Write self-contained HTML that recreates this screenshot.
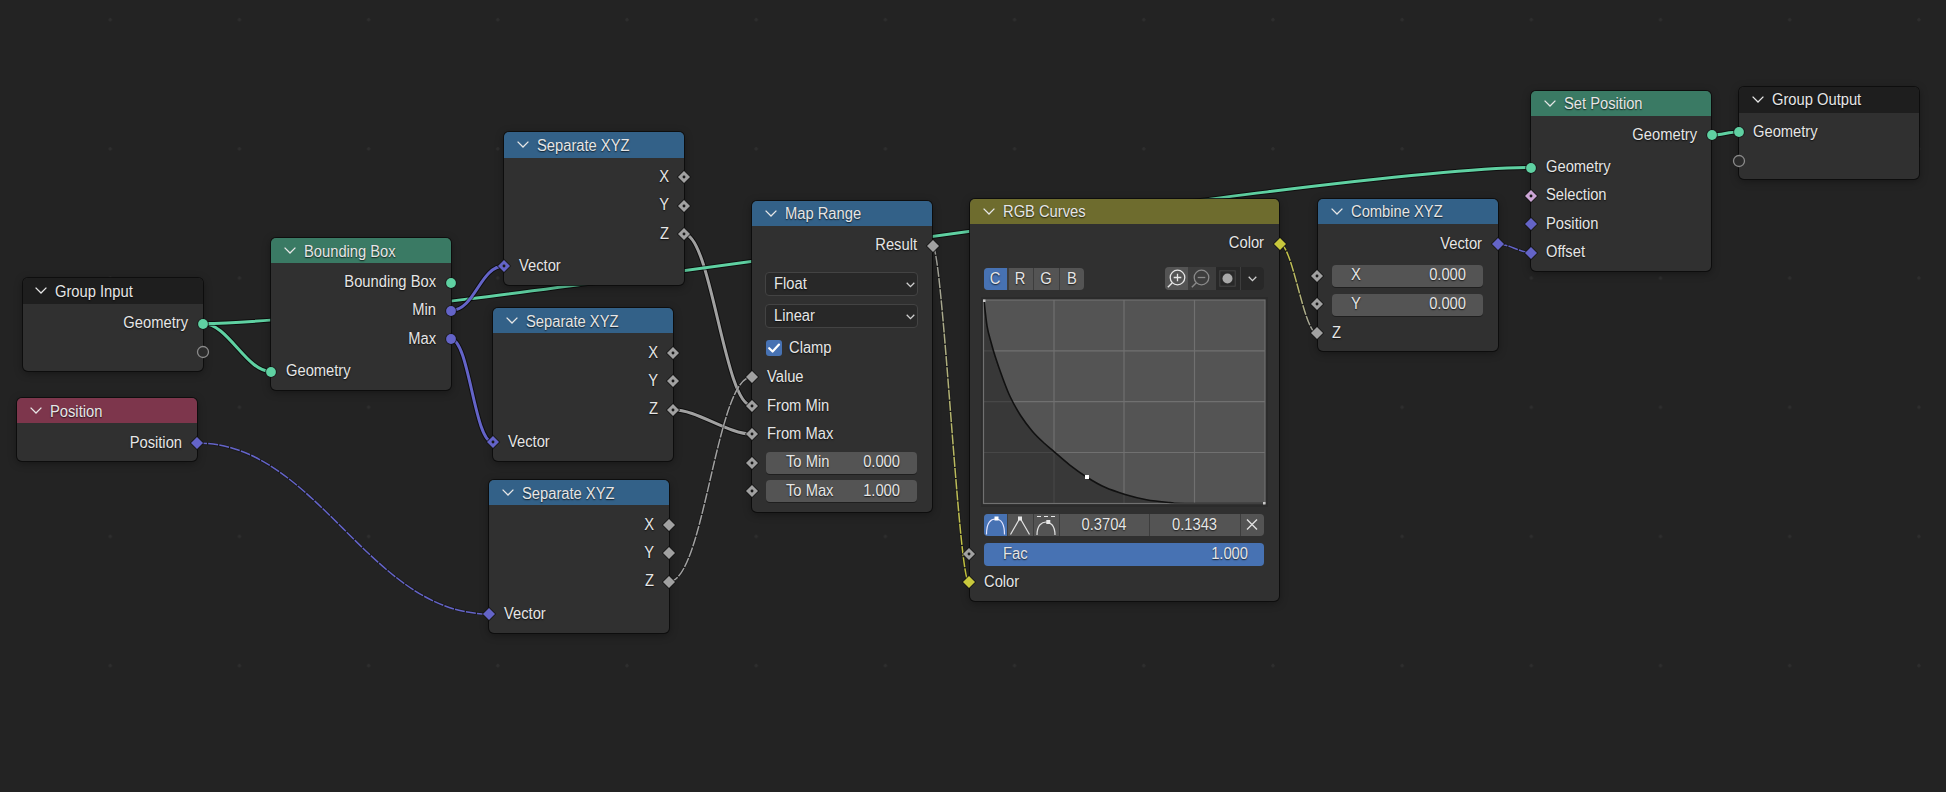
<!DOCTYPE html>
<html><head><meta charset="utf-8"><style>
html,body{margin:0;padding:0;}
body{width:1946px;height:792px;overflow:hidden;background:#232323;position:relative;background-image:radial-gradient(circle at 110.3px 19.7px, #2e2e2e 0, #2e2e2e 1.3px, rgba(35,35,35,0) 2px);background-size:129.2px 129.2px;background-position:0 0;font-family:"Liberation Sans",sans-serif;}
.n{position:absolute;background:#303030;border-radius:5px;box-shadow:0 0 0 1px rgba(10,10,10,0.8),0 2px 9px rgba(0,0,0,0.38);overflow:hidden;}
.hd{position:absolute;left:0;top:0;right:0;}
.t{position:absolute;font-size:16px;line-height:18px;color:#e6e6e6;white-space:nowrap;transform:scaleX(0.92);transform-origin:0 50%;text-shadow:0 1px 1.5px rgba(0,0,0,0.75);}
.r{text-align:right;transform-origin:100% 50%;}
.c{text-align:center;transform-origin:50% 50%;}
svg{position:absolute;left:0;top:0;overflow:visible;}
</style></head><body>

<svg width="1946" height="792" style="z-index:1">
<defs>
<linearGradient id="g8" gradientUnits="userSpaceOnUse" x1="932.5" y1="245.5" x2="968.8" y2="582"><stop offset="0" stop-color="#a1a1a1"/><stop offset="1" stop-color="#c8c83c"/></linearGradient>
<linearGradient id="g9" gradientUnits="userSpaceOnUse" x1="1279.5" y1="243.5" x2="1316.8" y2="333"><stop offset="0" stop-color="#c8c83c"/><stop offset="1" stop-color="#a1a1a1"/></linearGradient>
</defs>
<path d="M203,323.5 C228,323.5 246,371.5 271,371.5" fill="none" stroke="rgba(0,0,0,0.6)" stroke-width="5"/>
<path d="M203,323.5 C228,323.5 246,371.5 271,371.5" fill="none" stroke="#5fd1a2" stroke-width="3"/>
<path d="M684,234 C711,234 724.6,405.5 751.6,405.5" fill="none" stroke="rgba(0,0,0,0.6)" stroke-width="5"/>
<path d="M684,234 C711,234 724.6,405.5 751.6,405.5" fill="none" stroke="#a1a1a1" stroke-width="3"/>
<path d="M203,323.5 C403,323.5 1331,167.5 1531,167.5" fill="none" stroke="rgba(0,0,0,0.6)" stroke-width="5"/>
<path d="M203,323.5 C403,323.5 1331,167.5 1531,167.5" fill="none" stroke="#5fd1a2" stroke-width="3"/>
<path d="M451,310.5 C475,310.5 480,266 504,266" fill="none" stroke="rgba(0,0,0,0.6)" stroke-width="5"/>
<path d="M451,310.5 C475,310.5 480,266 504,266" fill="none" stroke="#6464c8" stroke-width="3"/>
<path d="M451,339 C469,339 474.5,442 492.5,442" fill="none" stroke="rgba(0,0,0,0.6)" stroke-width="5"/>
<path d="M451,339 C469,339 474.5,442 492.5,442" fill="none" stroke="#6464c8" stroke-width="3"/>
<path d="M197,443 C317,443 369,614 489,614" fill="none" stroke="rgba(0,0,0,0.25)" stroke-width="3.0"/>
<path d="M197,443 C317,443 369,614 489,614" fill="none" stroke="#6464c8" stroke-width="1.5" stroke-dasharray="10 1.2"/>
<path d="M673.4,409.7 C696.4,409.7 728.5,434.1 751.5,434.1" fill="none" stroke="rgba(0,0,0,0.6)" stroke-width="5"/>
<path d="M673.4,409.7 C696.4,409.7 728.5,434.1 751.5,434.1" fill="none" stroke="#a1a1a1" stroke-width="3"/>
<path d="M669,581.6 C704,581.6 716.5,377 751.5,377" fill="none" stroke="rgba(0,0,0,0.25)" stroke-width="3.0"/>
<path d="M669,581.6 C704,581.6 716.5,377 751.5,377" fill="none" stroke="#a1a1a1" stroke-width="1.5" stroke-dasharray="10 1.2"/>
<path d="M932.5,245.5 C942.5,245.5 958.8,582 968.8,582" fill="none" stroke="rgba(0,0,0,0.25)" stroke-width="3.0"/>
<path d="M932.5,245.5 C942.5,245.5 958.8,582 968.8,582" fill="none" stroke="url(#g8)" stroke-width="1.5" stroke-dasharray="10 1.2"/>
<path d="M1279.5,243.5 C1292.5,243.5 1303.8,333 1316.8,333" fill="none" stroke="rgba(0,0,0,0.25)" stroke-width="3.0"/>
<path d="M1279.5,243.5 C1292.5,243.5 1303.8,333 1316.8,333" fill="none" stroke="url(#g9)" stroke-width="1.5" stroke-dasharray="10 1.2"/>
<path d="M1497.5,244 C1509.5,244 1519,252.5 1531,252.5" fill="none" stroke="rgba(0,0,0,0.25)" stroke-width="3.0"/>
<path d="M1497.5,244 C1509.5,244 1519,252.5 1531,252.5" fill="none" stroke="#6464c8" stroke-width="1.5" stroke-dasharray="10 1.2"/>
<path d="M1712,135 C1722,135 1728.5,132 1738.5,132" fill="none" stroke="rgba(0,0,0,0.6)" stroke-width="5"/>
<path d="M1712,135 C1722,135 1728.5,132 1738.5,132" fill="none" stroke="#5fd1a2" stroke-width="3"/>
</svg>
<div class="n" style="left:22.5px;top:278.2px;width:180px;height:93px;z-index:2">
<div class="hd" style="height:26.3px;background:#1e1e1e"></div>
<div style="position:absolute;left:12.8px;top:9.2px;line-height:0"><svg width="12" height="7" viewBox="0 0 12 7"><path d="M0.6,0.6 L6,6 L11.4,0.6" fill="none" stroke="#e6e6e6" stroke-width="1.3"/></svg></div>
<div class="t" style="left:32.8px;top:4.5px">Group Input</div>
</div>
<div class="n" style="left:17px;top:398px;width:179.5px;height:63px;z-index:2">
<div class="hd" style="height:25.3px;background:#7d364c"></div>
<div style="position:absolute;left:12.8px;top:9.2px;line-height:0"><svg width="12" height="7" viewBox="0 0 12 7"><path d="M0.6,0.6 L6,6 L11.4,0.6" fill="none" stroke="#e6e6e6" stroke-width="1.3"/></svg></div>
<div class="t" style="left:32.8px;top:4.5px">Position</div>
</div>
<div class="n" style="left:271px;top:238px;width:179.5px;height:151.5px;z-index:2">
<div class="hd" style="height:25.3px;background:#3a7a64"></div>
<div style="position:absolute;left:12.8px;top:9.2px;line-height:0"><svg width="12" height="7" viewBox="0 0 12 7"><path d="M0.6,0.6 L6,6 L11.4,0.6" fill="none" stroke="#e6e6e6" stroke-width="1.3"/></svg></div>
<div class="t" style="left:32.8px;top:4.5px">Bounding Box</div>
</div>
<div class="n" style="left:504px;top:132px;width:180px;height:153px;z-index:2">
<div class="hd" style="height:26.2px;background:#336188"></div>
<div style="position:absolute;left:12.8px;top:9.2px;line-height:0"><svg width="12" height="7" viewBox="0 0 12 7"><path d="M0.6,0.6 L6,6 L11.4,0.6" fill="none" stroke="#e6e6e6" stroke-width="1.3"/></svg></div>
<div class="t" style="left:32.8px;top:4.5px">Separate XYZ</div>
</div>
<div class="n" style="left:493px;top:308px;width:180px;height:153px;z-index:2">
<div class="hd" style="height:25.4px;background:#336188"></div>
<div style="position:absolute;left:12.8px;top:9.2px;line-height:0"><svg width="12" height="7" viewBox="0 0 12 7"><path d="M0.6,0.6 L6,6 L11.4,0.6" fill="none" stroke="#e6e6e6" stroke-width="1.3"/></svg></div>
<div class="t" style="left:32.8px;top:4.5px">Separate XYZ</div>
</div>
<div class="n" style="left:489px;top:480px;width:180px;height:153px;z-index:2">
<div class="hd" style="height:25.4px;background:#336188"></div>
<div style="position:absolute;left:12.8px;top:9.2px;line-height:0"><svg width="12" height="7" viewBox="0 0 12 7"><path d="M0.6,0.6 L6,6 L11.4,0.6" fill="none" stroke="#e6e6e6" stroke-width="1.3"/></svg></div>
<div class="t" style="left:32.8px;top:4.5px">Separate XYZ</div>
</div>
<div class="n" style="left:752px;top:200.8px;width:180px;height:311.5px;z-index:2">
<div class="hd" style="height:25.5px;background:#336188"></div>
<div style="position:absolute;left:12.8px;top:9.2px;line-height:0"><svg width="12" height="7" viewBox="0 0 12 7"><path d="M0.6,0.6 L6,6 L11.4,0.6" fill="none" stroke="#e6e6e6" stroke-width="1.3"/></svg></div>
<div class="t" style="left:32.8px;top:4.5px">Map Range</div>
</div>
<div class="n" style="left:970px;top:198.8px;width:309px;height:402px;z-index:2">
<div class="hd" style="height:25px;background:#6e6c2e"></div>
<div style="position:absolute;left:12.8px;top:9.2px;line-height:0"><svg width="12" height="7" viewBox="0 0 12 7"><path d="M0.6,0.6 L6,6 L11.4,0.6" fill="none" stroke="#e6e6e6" stroke-width="1.3"/></svg></div>
<div class="t" style="left:32.8px;top:4.5px">RGB Curves</div>
</div>
<div class="n" style="left:1318px;top:198.8px;width:179.5px;height:152.5px;z-index:2">
<div class="hd" style="height:25px;background:#336188"></div>
<div style="position:absolute;left:12.8px;top:9.2px;line-height:0"><svg width="12" height="7" viewBox="0 0 12 7"><path d="M0.6,0.6 L6,6 L11.4,0.6" fill="none" stroke="#e6e6e6" stroke-width="1.3"/></svg></div>
<div class="t" style="left:32.8px;top:4.5px">Combine XYZ</div>
</div>
<div class="n" style="left:1531.2px;top:90.7px;width:180px;height:180px;z-index:2">
<div class="hd" style="height:25.4px;background:#3a7a64"></div>
<div style="position:absolute;left:12.8px;top:9.2px;line-height:0"><svg width="12" height="7" viewBox="0 0 12 7"><path d="M0.6,0.6 L6,6 L11.4,0.6" fill="none" stroke="#e6e6e6" stroke-width="1.3"/></svg></div>
<div class="t" style="left:32.8px;top:4.5px">Set Position</div>
</div>
<div class="n" style="left:1738.8px;top:86.7px;width:180px;height:92px;z-index:2">
<div class="hd" style="height:26.3px;background:#1e1e1e"></div>
<div style="position:absolute;left:12.8px;top:9.2px;line-height:0"><svg width="12" height="7" viewBox="0 0 12 7"><path d="M0.6,0.6 L6,6 L11.4,0.6" fill="none" stroke="#e6e6e6" stroke-width="1.3"/></svg></div>
<div class="t" style="left:32.8px;top:4.5px">Group Output</div>
</div>
<div id="L" style="position:absolute;left:0;top:0;z-index:3">
<div class="t r" style="left:-112.5px;width:300px;top:314.1px">Geometry</div>
<div class="t r" style="left:-118.5px;width:300px;top:433.6px">Position</div>
<div class="t r" style="left:135.5px;width:300px;top:273.1px">Bounding Box</div>
<div class="t r" style="left:135.5px;width:300px;top:301.1px">Min</div>
<div class="t r" style="left:135.5px;width:300px;top:329.6px">Max</div>
<div class="t" style="left:285.5px;top:362.1px">Geometry</div>
<div class="t r" style="left:368.5px;width:300px;top:167.60000000000002px">X</div>
<div class="t r" style="left:368.5px;width:300px;top:196.10000000000002px">Y</div>
<div class="t r" style="left:368.5px;width:300px;top:224.60000000000002px">Z</div>
<div class="t" style="left:518.5px;top:256.6px">Vector</div>
<div class="t r" style="left:357.5px;width:300px;top:343.6px">X</div>
<div class="t r" style="left:357.5px;width:300px;top:371.90000000000003px">Y</div>
<div class="t r" style="left:357.5px;width:300px;top:400.20000000000005px">Z</div>
<div class="t" style="left:507.5px;top:432.6px">Vector</div>
<div class="t r" style="left:353.5px;width:300px;top:515.5999999999999px">X</div>
<div class="t r" style="left:353.5px;width:300px;top:543.8999999999999px">Y</div>
<div class="t r" style="left:353.5px;width:300px;top:572.1999999999999px">Z</div>
<div class="t" style="left:503.5px;top:604.5999999999999px">Vector</div>
<div class="t r" style="left:617.0px;width:300px;top:236.10000000000002px">Result</div>
<div class="t" style="left:766.5px;top:367.6px">Value</div>
<div class="t" style="left:766.5px;top:396.6px">From Min</div>
<div class="t" style="left:766.5px;top:424.6px">From Max</div>
<div class="t r" style="left:964.0px;width:300px;top:234.10000000000002px">Color</div>
<div class="t" style="left:984.0px;top:572.5999999999999px">Color</div>
<div class="t r" style="left:1182.0px;width:300px;top:234.60000000000002px">Vector</div>
<div class="t" style="left:1332.0px;top:323.6px">Z</div>
<div class="t r" style="left:1396.5px;width:300px;top:125.60000000000001px">Geometry</div>
<div class="t" style="left:1545.5px;top:158.10000000000002px">Geometry</div>
<div class="t" style="left:1545.5px;top:186.20000000000002px">Selection</div>
<div class="t" style="left:1545.5px;top:215.00000000000003px">Position</div>
<div class="t" style="left:1545.5px;top:243.10000000000002px">Offset</div>
<div class="t" style="left:1753.0px;top:122.60000000000001px">Geometry</div>
</div>
<div style="position:absolute;left:0;top:0;z-index:3">
<div style="position:absolute;left:765px;top:272px;width:153px;height:24px;background:#282828;border-radius:4px;box-sizing:border-box;border:1px solid #434343;"></div>
<div class="t" style="left:774px;top:274.6px">Float</div>
<svg style="left:905.5px;top:281.5px" width="9" height="6" viewBox="0 0 9 6"><path d="M0.7,0.8 L4.5,4.6 L8.3,0.8" fill="none" stroke="#d0d0d0" stroke-width="1.3"/></svg>
<div style="position:absolute;left:765px;top:304px;width:153px;height:24px;background:#282828;border-radius:4px;box-sizing:border-box;border:1px solid #434343;"></div>
<div class="t" style="left:774px;top:306.6px">Linear</div>
<svg style="left:905.5px;top:313.5px" width="9" height="6" viewBox="0 0 9 6"><path d="M0.7,0.8 L4.5,4.6 L8.3,0.8" fill="none" stroke="#d0d0d0" stroke-width="1.3"/></svg>
<div style="position:absolute;left:766px;top:340px;width:16px;height:16px;background:#4772b3;border-radius:3px;"></div>
<svg style="left:766px;top:340px" width="16" height="16" viewBox="0 0 16 16"><path d="M3.2,8.2 L6.6,11.5 L13,4.6" fill="none" stroke="#ffffff" stroke-width="2.2" stroke-linecap="round" stroke-linejoin="round"/></svg>
<div class="t" style="left:788.5px;top:338.6px">Clamp</div>
<div style="position:absolute;left:766px;top:452.5px;width:151px;height:22.5px;background:rgba(0,0,0,0.35);border-radius:4px;"></div>
<div style="position:absolute;left:766px;top:451.5px;width:151px;height:22.5px;background:#545454;border-radius:4px;"></div>
<div class="t" style="left:785.5px;top:453.35px">To Min</div>
<div class="t r" style="left:599.5px;width:300px;top:453.35px">0.000</div>
<div style="position:absolute;left:766px;top:480.8px;width:151px;height:22.5px;background:rgba(0,0,0,0.35);border-radius:4px;"></div>
<div style="position:absolute;left:766px;top:479.8px;width:151px;height:22.5px;background:#545454;border-radius:4px;"></div>
<div class="t" style="left:785.5px;top:481.65000000000003px">To Max</div>
<div class="t r" style="left:599.5px;width:300px;top:481.65000000000003px">1.000</div>
<div style="position:absolute;left:1332px;top:265.5px;width:151px;height:22.5px;background:rgba(0,0,0,0.35);border-radius:4px;"></div>
<div style="position:absolute;left:1332px;top:264.5px;width:151px;height:22.5px;background:#545454;border-radius:4px;"></div>
<div class="t" style="left:1351px;top:266.35px">X</div>
<div class="t r" style="left:1166px;width:300px;top:266.35px">0.000</div>
<div style="position:absolute;left:1332px;top:294.5px;width:151px;height:22.0px;background:rgba(0,0,0,0.35);border-radius:4px;"></div>
<div style="position:absolute;left:1332px;top:293.5px;width:151px;height:22.0px;background:#545454;border-radius:4px;"></div>
<div class="t" style="left:1351px;top:295.1px">Y</div>
<div class="t r" style="left:1166px;width:300px;top:295.1px">0.000</div>
<div style="position:absolute;left:984px;top:268px;width:100px;height:22px;background:#545454;border-radius:4px;"></div>
<div style="position:absolute;left:984px;top:268px;width:22.5px;height:22px;background:#4772b3;border-radius:0px;border-radius:4px 0 0 4px;"></div>
<div style="position:absolute;left:1007px;top:268px;width:1.5px;height:22px;background:#3d3d3d;border-radius:0px;"></div>
<div style="position:absolute;left:1032.5px;top:268px;width:1.5px;height:22px;background:#3d3d3d;border-radius:0px;"></div>
<div style="position:absolute;left:1058.5px;top:268px;width:1.5px;height:22px;background:#3d3d3d;border-radius:0px;"></div>
<div class="t c" style="left:975.3px;width:40px;top:269.6px">C</div>
<div class="t c" style="left:1000px;width:40px;top:269.6px">R</div>
<div class="t c" style="left:1025.5px;width:40px;top:269.6px">G</div>
<div class="t c" style="left:1051.5px;width:40px;top:269.6px">B</div>
<div style="position:absolute;left:1165px;top:267px;width:99px;height:23px;background:#3d3d3d;border-radius:4px;"></div>
<div style="position:absolute;left:1165px;top:267px;width:22.5px;height:23px;background:#545454;border-radius:0px;border-radius:4px 0 0 4px;"></div>
<div style="position:absolute;left:1216px;top:267px;width:48px;height:23px;background:#282828;border-radius:0px;border-radius:0 4px 4px 0;"></div>
<div style="position:absolute;left:1239.5px;top:267px;width:1.5px;height:23px;background:#3d3d3d;border-radius:0px;"></div>
<svg style="left:1165px;top:267px" width="24" height="23" viewBox="0 0 24 23"><circle cx="12.5" cy="10.5" r="7.3" fill="none" stroke="#e6e6e6" stroke-width="1.3"/><path d="M8.7,10.5 H16.3 M12.5,6.7 V14.3" stroke="#e6e6e6" stroke-width="1.3"/><path d="M7.3,15.7 L2.8,20.2" stroke="#e6e6e6" stroke-width="1.4"/></svg>
<svg style="left:1189px;top:267px" width="24" height="23" viewBox="0 0 24 23"><circle cx="12.5" cy="10.5" r="7.3" fill="none" stroke="#8a8a8a" stroke-width="1.3"/><path d="M8.7,10.5 H16.3" stroke="#8a8a8a" stroke-width="1.3"/><path d="M7.3,15.7 L2.8,20.2" stroke="#8a8a8a" stroke-width="1.4"/></svg>
<svg style="left:1216px;top:267px" width="23" height="23" viewBox="0 0 23 23"><rect x="3.8" y="3.8" width="15.4" height="15.4" fill="none" stroke="#454545" stroke-width="1"/><circle cx="11.5" cy="11.5" r="5" fill="#a8a8a8"/></svg>
<svg style="left:1248px;top:276px" width="9" height="6" viewBox="0 0 9 6"><path d="M0.7,0.8 L4.5,4.6 L8.3,0.8" fill="none" stroke="#d0d0d0" stroke-width="1.3"/></svg>
<div style="position:absolute;left:980.5px;top:297px;width:287.5px;height:209.5px;background:#2b2b2b;border-radius:0px;"></div>
<svg style="left:0;top:0" width="1946" height="792"><defs><clipPath id="cu"><path d="M984,300.5 C984.52,304.80 985.92,319.30 987.1,326.3 C988.28,333.30 989.75,337.45 991.1,342.5 C992.45,347.55 993.35,350.88 995.2,356.6 C997.05,362.32 999.68,370.07 1002.2,376.8 C1004.72,383.53 1007.27,390.60 1010.3,397 C1013.33,403.40 1016.70,409.47 1020.4,415.2 C1024.10,420.93 1028.47,426.68 1032.5,431.4 C1036.53,436.12 1040.98,440.10 1044.6,443.5 C1048.22,446.90 1050.05,448.25 1054.2,451.8 C1058.35,455.35 1064.05,460.57 1069.5,464.8 C1074.95,469.03 1080.98,473.45 1086.9,477.2 C1092.82,480.95 1098.63,484.43 1105,487.3 C1111.37,490.17 1118.20,492.33 1125.1,494.4 C1132.00,496.47 1138.92,498.33 1146.4,499.7 C1153.88,501.07 1163.57,501.97 1170,502.6 C1176.43,503.23 1169.17,503.35 1185,503.5 C1200.83,503.65 1251.67,503.50 1265,503.5 L983.5,503.5 Z"/></clipPath><clipPath id="gr"><rect x="983.5" y="300" width="281.5" height="203.5"/></clipPath></defs><rect x="983.5" y="300" width="281.5" height="203.5" fill="#545454"/><line x1="1054" y1="300" x2="1054" y2="503.5" stroke="#707070" stroke-width="1.2"/><line x1="1124" y1="300" x2="1124" y2="503.5" stroke="#707070" stroke-width="1.2"/><line x1="1194.5" y1="300" x2="1194.5" y2="503.5" stroke="#707070" stroke-width="1.2"/><line x1="983.5" y1="350.8" x2="1265" y2="350.8" stroke="#707070" stroke-width="1.2"/><line x1="983.5" y1="401.7" x2="1265" y2="401.7" stroke="#707070" stroke-width="1.2"/><line x1="983.5" y1="452.5" x2="1265" y2="452.5" stroke="#707070" stroke-width="1.2"/><g clip-path="url(#cu)"><rect x="983.5" y="300" width="281.5" height="203.5" fill="#383838"/><line x1="1054" y1="300" x2="1054" y2="503.5" stroke="#474747" stroke-width="1.2"/><line x1="1124" y1="300" x2="1124" y2="503.5" stroke="#474747" stroke-width="1.2"/><line x1="1194.5" y1="300" x2="1194.5" y2="503.5" stroke="#474747" stroke-width="1.2"/><line x1="983.5" y1="350.8" x2="1265" y2="350.8" stroke="#474747" stroke-width="1.2"/><line x1="983.5" y1="401.7" x2="1265" y2="401.7" stroke="#474747" stroke-width="1.2"/><line x1="983.5" y1="452.5" x2="1265" y2="452.5" stroke="#474747" stroke-width="1.2"/></g><rect x="983.5" y="300" width="281.5" height="203.5" fill="none" stroke="#707070" stroke-width="1.2"/><path d="M984,300.5 C984.52,304.80 985.92,319.30 987.1,326.3 C988.28,333.30 989.75,337.45 991.1,342.5 C992.45,347.55 993.35,350.88 995.2,356.6 C997.05,362.32 999.68,370.07 1002.2,376.8 C1004.72,383.53 1007.27,390.60 1010.3,397 C1013.33,403.40 1016.70,409.47 1020.4,415.2 C1024.10,420.93 1028.47,426.68 1032.5,431.4 C1036.53,436.12 1040.98,440.10 1044.6,443.5 C1048.22,446.90 1050.05,448.25 1054.2,451.8 C1058.35,455.35 1064.05,460.57 1069.5,464.8 C1074.95,469.03 1080.98,473.45 1086.9,477.2 C1092.82,480.95 1098.63,484.43 1105,487.3 C1111.37,490.17 1118.20,492.33 1125.1,494.4 C1132.00,496.47 1138.92,498.33 1146.4,499.7 C1153.88,501.07 1163.57,501.97 1170,502.6 C1176.43,503.23 1169.17,503.35 1185,503.5 C1200.83,503.65 1251.67,503.50 1265,503.5" fill="none" stroke="#111111" stroke-width="1.6" clip-path="url(#gr)"/><rect x="1085" y="475" width="4" height="4" fill="#ffffff"/><rect x="983" y="299.5" width="2.5" height="2.5" fill="#c8c8c8"/><rect x="1263" y="502" width="2.5" height="2.5" fill="#c8c8c8"/></svg>
<div style="position:absolute;left:984px;top:514px;width:280px;height:22px;background:#545454;border-radius:4px;"></div>
<div style="position:absolute;left:984px;top:514px;width:22.5px;height:22px;background:#4772b3;border-radius:0px;border-radius:4px 0 0 4px;"></div>
<div style="position:absolute;left:1006.5px;top:514px;width:1.5px;height:22px;background:#3d3d3d;border-radius:0px;"></div>
<div style="position:absolute;left:1032.5px;top:514px;width:1.5px;height:22px;background:#3d3d3d;border-radius:0px;"></div>
<div style="position:absolute;left:1058.5px;top:514px;width:1.5px;height:22px;background:#3d3d3d;border-radius:0px;"></div>
<div style="position:absolute;left:1148.5px;top:514px;width:1.5px;height:22px;background:#3d3d3d;border-radius:0px;"></div>
<div style="position:absolute;left:1239.5px;top:514px;width:1.5px;height:22px;background:#3d3d3d;border-radius:0px;"></div>
<svg style="left:984px;top:514px" width="23" height="22" viewBox="0 0 23 22"><path d="M2.5,20.5 C2.5,8 7,5 11.5,5 C16,5 20.5,8 20.5,20.5" fill="none" stroke="#e6e6ff" stroke-width="1.2"/><rect x="10.5" y="2.5" width="4" height="4" fill="#ffffff"/></svg>
<svg style="left:1008px;top:514px" width="24" height="22" viewBox="0 0 24 22"><path d="M2.5,20.5 L12,4 L21.5,20.5" fill="none" stroke="#e0e0e0" stroke-width="1.2"/><rect x="10" y="2.5" width="4" height="4" fill="#e8e8e8"/></svg>
<svg style="left:1034px;top:514px" width="24" height="22" viewBox="0 0 24 22"><path d="M3,21 C3,11 8,8 12,8 C16,8 21,11 21,21" fill="none" stroke="#e0e0e0" stroke-width="1.2"/><path d="M3,2.5 H7 M10,2.5 H14 M17,2.5 H21" stroke="#e8e8e8" stroke-width="1.2"/><rect x="12.3" y="6" width="4" height="4" fill="#e8e8e8"/></svg>
<div class="t c" style="left:1060px;width:88px;top:515.5999999999999px">0.3704</div>
<div class="t c" style="left:1150px;width:89px;top:515.5999999999999px">0.1343</div>
<svg style="left:1244px;top:518px" width="16" height="14" viewBox="0 0 16 14"><path d="M3,1.5 L13,11.5 M13,1.5 L3,11.5" stroke="#e0e0e0" stroke-width="1.4"/></svg>
<div style="position:absolute;left:984px;top:543px;width:280px;height:23px;background:#4772b3;border-radius:4px;"></div>
<div class="t" style="left:1003px;top:545.0999999999999px">Fac</div>
<div class="t r" style="left:947.5px;width:300px;top:545.0999999999999px">1.000</div>
</div>
<svg style="left:195px;top:315.5px;z-index:4" width="16" height="16"><circle cx="8" cy="8" r="5.800000000000001" fill="#141414" fill-opacity="0.85"/><circle cx="8" cy="8" r="4.9" fill="#5fd1a2"/></svg>
<svg style="left:195px;top:344px;z-index:4" width="16" height="16"><circle cx="8" cy="8" r="5.5" fill="#2b2b2b" stroke="#8a8a8a" stroke-width="1.3"/></svg>
<svg style="left:189px;top:435px;z-index:4" width="16" height="16"><path d="M8,0.7999999999999998 L15.2,8 L8,15.2 L0.7999999999999998,8 Z" fill="#141414" fill-opacity="0.85"/><path d="M8,2.0 L14.0,8 L8,14.0 L2.0,8 Z" fill="#6464c8"/></svg>
<svg style="left:443px;top:274.5px;z-index:4" width="16" height="16"><circle cx="8" cy="8" r="5.800000000000001" fill="#141414" fill-opacity="0.85"/><circle cx="8" cy="8" r="4.9" fill="#5fd1a2"/></svg>
<svg style="left:443px;top:302.5px;z-index:4" width="16" height="16"><circle cx="8" cy="8" r="5.800000000000001" fill="#141414" fill-opacity="0.85"/><circle cx="8" cy="8" r="4.9" fill="#6464c8"/></svg>
<svg style="left:443px;top:331px;z-index:4" width="16" height="16"><circle cx="8" cy="8" r="5.800000000000001" fill="#141414" fill-opacity="0.85"/><circle cx="8" cy="8" r="4.9" fill="#6464c8"/></svg>
<svg style="left:263px;top:363.5px;z-index:4" width="16" height="16"><circle cx="8" cy="8" r="5.800000000000001" fill="#141414" fill-opacity="0.85"/><circle cx="8" cy="8" r="4.9" fill="#5fd1a2"/></svg>
<svg style="left:676px;top:169px;z-index:4" width="16" height="16"><path d="M8,0.7999999999999998 L15.2,8 L8,15.2 L0.7999999999999998,8 Z" fill="#141414" fill-opacity="0.85"/><path d="M8,2.0 L14.0,8 L8,14.0 L2.0,8 Z" fill="#a1a1a1"/><circle cx="8" cy="8" r="1.45" fill="#1a1a1a"/></svg>
<svg style="left:676px;top:197.5px;z-index:4" width="16" height="16"><path d="M8,0.7999999999999998 L15.2,8 L8,15.2 L0.7999999999999998,8 Z" fill="#141414" fill-opacity="0.85"/><path d="M8,2.0 L14.0,8 L8,14.0 L2.0,8 Z" fill="#a1a1a1"/><circle cx="8" cy="8" r="1.45" fill="#1a1a1a"/></svg>
<svg style="left:676px;top:226px;z-index:4" width="16" height="16"><path d="M8,0.7999999999999998 L15.2,8 L8,15.2 L0.7999999999999998,8 Z" fill="#141414" fill-opacity="0.85"/><path d="M8,2.0 L14.0,8 L8,14.0 L2.0,8 Z" fill="#a1a1a1"/><circle cx="8" cy="8" r="1.45" fill="#1a1a1a"/></svg>
<svg style="left:496px;top:258px;z-index:4" width="16" height="16"><path d="M8,0.7999999999999998 L15.2,8 L8,15.2 L0.7999999999999998,8 Z" fill="#141414" fill-opacity="0.85"/><path d="M8,2.0 L14.0,8 L8,14.0 L2.0,8 Z" fill="#6464c8"/><circle cx="8" cy="8" r="1.45" fill="#1a1a1a"/></svg>
<svg style="left:665px;top:345px;z-index:4" width="16" height="16"><path d="M8,0.7999999999999998 L15.2,8 L8,15.2 L0.7999999999999998,8 Z" fill="#141414" fill-opacity="0.85"/><path d="M8,2.0 L14.0,8 L8,14.0 L2.0,8 Z" fill="#a1a1a1"/><circle cx="8" cy="8" r="1.45" fill="#1a1a1a"/></svg>
<svg style="left:665px;top:373.3px;z-index:4" width="16" height="16"><path d="M8,0.7999999999999998 L15.2,8 L8,15.2 L0.7999999999999998,8 Z" fill="#141414" fill-opacity="0.85"/><path d="M8,2.0 L14.0,8 L8,14.0 L2.0,8 Z" fill="#a1a1a1"/><circle cx="8" cy="8" r="1.45" fill="#1a1a1a"/></svg>
<svg style="left:665px;top:401.6px;z-index:4" width="16" height="16"><path d="M8,0.7999999999999998 L15.2,8 L8,15.2 L0.7999999999999998,8 Z" fill="#141414" fill-opacity="0.85"/><path d="M8,2.0 L14.0,8 L8,14.0 L2.0,8 Z" fill="#a1a1a1"/><circle cx="8" cy="8" r="1.45" fill="#1a1a1a"/></svg>
<svg style="left:485px;top:434px;z-index:4" width="16" height="16"><path d="M8,0.7999999999999998 L15.2,8 L8,15.2 L0.7999999999999998,8 Z" fill="#141414" fill-opacity="0.85"/><path d="M8,2.0 L14.0,8 L8,14.0 L2.0,8 Z" fill="#6464c8"/><circle cx="8" cy="8" r="1.45" fill="#1a1a1a"/></svg>
<svg style="left:661px;top:517px;z-index:4" width="16" height="16"><path d="M8,0.7999999999999998 L15.2,8 L8,15.2 L0.7999999999999998,8 Z" fill="#141414" fill-opacity="0.85"/><path d="M8,2.0 L14.0,8 L8,14.0 L2.0,8 Z" fill="#a1a1a1"/></svg>
<svg style="left:661px;top:545.3px;z-index:4" width="16" height="16"><path d="M8,0.7999999999999998 L15.2,8 L8,15.2 L0.7999999999999998,8 Z" fill="#141414" fill-opacity="0.85"/><path d="M8,2.0 L14.0,8 L8,14.0 L2.0,8 Z" fill="#a1a1a1"/></svg>
<svg style="left:661px;top:573.6px;z-index:4" width="16" height="16"><path d="M8,0.7999999999999998 L15.2,8 L8,15.2 L0.7999999999999998,8 Z" fill="#141414" fill-opacity="0.85"/><path d="M8,2.0 L14.0,8 L8,14.0 L2.0,8 Z" fill="#a1a1a1"/></svg>
<svg style="left:481px;top:606px;z-index:4" width="16" height="16"><path d="M8,0.7999999999999998 L15.2,8 L8,15.2 L0.7999999999999998,8 Z" fill="#141414" fill-opacity="0.85"/><path d="M8,2.0 L14.0,8 L8,14.0 L2.0,8 Z" fill="#6464c8"/></svg>
<svg style="left:924.5px;top:237.5px;z-index:4" width="16" height="16"><path d="M8,0.7999999999999998 L15.2,8 L8,15.2 L0.7999999999999998,8 Z" fill="#141414" fill-opacity="0.85"/><path d="M8,2.0 L14.0,8 L8,14.0 L2.0,8 Z" fill="#a1a1a1"/></svg>
<svg style="left:744px;top:369px;z-index:4" width="16" height="16"><path d="M8,0.7999999999999998 L15.2,8 L8,15.2 L0.7999999999999998,8 Z" fill="#141414" fill-opacity="0.85"/><path d="M8,2.0 L14.0,8 L8,14.0 L2.0,8 Z" fill="#a1a1a1"/></svg>
<svg style="left:744px;top:398px;z-index:4" width="16" height="16"><path d="M8,0.7999999999999998 L15.2,8 L8,15.2 L0.7999999999999998,8 Z" fill="#141414" fill-opacity="0.85"/><path d="M8,2.0 L14.0,8 L8,14.0 L2.0,8 Z" fill="#a1a1a1"/><circle cx="8" cy="8" r="1.45" fill="#1a1a1a"/></svg>
<svg style="left:744px;top:426px;z-index:4" width="16" height="16"><path d="M8,0.7999999999999998 L15.2,8 L8,15.2 L0.7999999999999998,8 Z" fill="#141414" fill-opacity="0.85"/><path d="M8,2.0 L14.0,8 L8,14.0 L2.0,8 Z" fill="#a1a1a1"/><circle cx="8" cy="8" r="1.45" fill="#1a1a1a"/></svg>
<svg style="left:744px;top:454.5px;z-index:4" width="16" height="16"><path d="M8,0.7999999999999998 L15.2,8 L8,15.2 L0.7999999999999998,8 Z" fill="#141414" fill-opacity="0.85"/><path d="M8,2.0 L14.0,8 L8,14.0 L2.0,8 Z" fill="#a1a1a1"/><circle cx="8" cy="8" r="1.45" fill="#1a1a1a"/></svg>
<svg style="left:744px;top:483px;z-index:4" width="16" height="16"><path d="M8,0.7999999999999998 L15.2,8 L8,15.2 L0.7999999999999998,8 Z" fill="#141414" fill-opacity="0.85"/><path d="M8,2.0 L14.0,8 L8,14.0 L2.0,8 Z" fill="#a1a1a1"/><circle cx="8" cy="8" r="1.45" fill="#1a1a1a"/></svg>
<svg style="left:1271.5px;top:235.5px;z-index:4" width="16" height="16"><path d="M8,0.7999999999999998 L15.2,8 L8,15.2 L0.7999999999999998,8 Z" fill="#141414" fill-opacity="0.85"/><path d="M8,2.0 L14.0,8 L8,14.0 L2.0,8 Z" fill="#c8c83c"/></svg>
<svg style="left:960.8px;top:546px;z-index:4" width="16" height="16"><path d="M8,0.7999999999999998 L15.2,8 L8,15.2 L0.7999999999999998,8 Z" fill="#141414" fill-opacity="0.85"/><path d="M8,2.0 L14.0,8 L8,14.0 L2.0,8 Z" fill="#a1a1a1"/><circle cx="8" cy="8" r="1.45" fill="#1a1a1a"/></svg>
<svg style="left:960.8px;top:574px;z-index:4" width="16" height="16"><path d="M8,0.7999999999999998 L15.2,8 L8,15.2 L0.7999999999999998,8 Z" fill="#141414" fill-opacity="0.85"/><path d="M8,2.0 L14.0,8 L8,14.0 L2.0,8 Z" fill="#c8c83c"/></svg>
<svg style="left:1489.5px;top:236px;z-index:4" width="16" height="16"><path d="M8,0.7999999999999998 L15.2,8 L8,15.2 L0.7999999999999998,8 Z" fill="#141414" fill-opacity="0.85"/><path d="M8,2.0 L14.0,8 L8,14.0 L2.0,8 Z" fill="#6464c8"/></svg>
<svg style="left:1308.8px;top:268px;z-index:4" width="16" height="16"><path d="M8,0.7999999999999998 L15.2,8 L8,15.2 L0.7999999999999998,8 Z" fill="#141414" fill-opacity="0.85"/><path d="M8,2.0 L14.0,8 L8,14.0 L2.0,8 Z" fill="#a1a1a1"/><circle cx="8" cy="8" r="1.45" fill="#1a1a1a"/></svg>
<svg style="left:1308.8px;top:296.4px;z-index:4" width="16" height="16"><path d="M8,0.7999999999999998 L15.2,8 L8,15.2 L0.7999999999999998,8 Z" fill="#141414" fill-opacity="0.85"/><path d="M8,2.0 L14.0,8 L8,14.0 L2.0,8 Z" fill="#a1a1a1"/><circle cx="8" cy="8" r="1.45" fill="#1a1a1a"/></svg>
<svg style="left:1308.8px;top:325px;z-index:4" width="16" height="16"><path d="M8,0.7999999999999998 L15.2,8 L8,15.2 L0.7999999999999998,8 Z" fill="#141414" fill-opacity="0.85"/><path d="M8,2.0 L14.0,8 L8,14.0 L2.0,8 Z" fill="#a1a1a1"/></svg>
<svg style="left:1704px;top:127px;z-index:4" width="16" height="16"><circle cx="8" cy="8" r="5.800000000000001" fill="#141414" fill-opacity="0.85"/><circle cx="8" cy="8" r="4.9" fill="#5fd1a2"/></svg>
<svg style="left:1523px;top:159.5px;z-index:4" width="16" height="16"><circle cx="8" cy="8" r="5.800000000000001" fill="#141414" fill-opacity="0.85"/><circle cx="8" cy="8" r="4.9" fill="#5fd1a2"/></svg>
<svg style="left:1523px;top:187.6px;z-index:4" width="16" height="16"><path d="M8,0.7999999999999998 L15.2,8 L8,15.2 L0.7999999999999998,8 Z" fill="#141414" fill-opacity="0.85"/><path d="M8,2.0 L14.0,8 L8,14.0 L2.0,8 Z" fill="#cca6d6"/><circle cx="8" cy="8" r="1.45" fill="#1a1a1a"/></svg>
<svg style="left:1523px;top:216.4px;z-index:4" width="16" height="16"><path d="M8,0.7999999999999998 L15.2,8 L8,15.2 L0.7999999999999998,8 Z" fill="#141414" fill-opacity="0.85"/><path d="M8,2.0 L14.0,8 L8,14.0 L2.0,8 Z" fill="#6464c8"/></svg>
<svg style="left:1523px;top:244.5px;z-index:4" width="16" height="16"><path d="M8,0.7999999999999998 L15.2,8 L8,15.2 L0.7999999999999998,8 Z" fill="#141414" fill-opacity="0.85"/><path d="M8,2.0 L14.0,8 L8,14.0 L2.0,8 Z" fill="#6464c8"/></svg>
<svg style="left:1730.5px;top:124px;z-index:4" width="16" height="16"><circle cx="8" cy="8" r="5.800000000000001" fill="#141414" fill-opacity="0.85"/><circle cx="8" cy="8" r="4.9" fill="#5fd1a2"/></svg>
<svg style="left:1730.5px;top:152.5px;z-index:4" width="16" height="16"><circle cx="8" cy="8" r="5.5" fill="#2b2b2b" stroke="#8a8a8a" stroke-width="1.3"/></svg>
</body></html>
